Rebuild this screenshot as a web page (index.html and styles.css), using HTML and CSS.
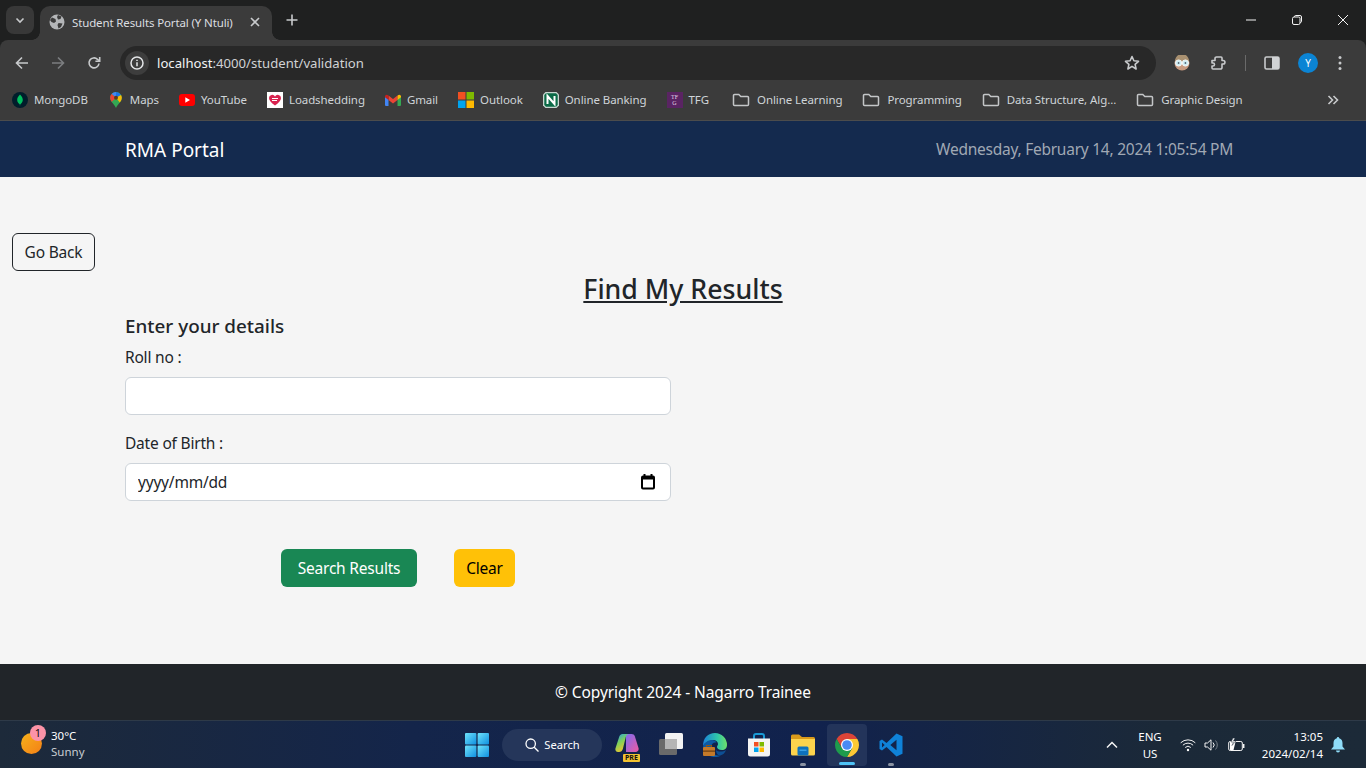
FILE: index.html
```html
<!DOCTYPE html>
<html lang="en">
<head>
<meta charset="utf-8">
<title>Student Results Portal (Y Ntuli)</title>
<link rel="stylesheet" href="styles.css">
</head>
<body>
<div class="screen">
  <header class="chrome">
    <div class="tabstrip">
      <div class="tab-search"><svg width="12" height="12" viewBox="0 0 12 12"><path d="M2.5 4.5 6 8l3.5-3.5" class="st-light2"/></svg></div>
      <div class="tab">
        <svg width="16" height="16" viewBox="0 0 16 16"><circle cx="8" cy="8" r="7.5" fill="#b4b6b8"/><path d="M3 3.500 6.500 5 7 7.500 5 9 2.500 8 1 6zM9 1l3.500 1.500-1 2.500-2.500.5-1-2.500zM9.500 9l4 .5L12 13l-2.500 1.500L8.500 11z" fill="#3b3b3b"/></svg>
        <span class="tab-title">Student Results Portal (Y Ntuli)</span>
        <svg class="tab-close" width="10" height="10" viewBox="0 0 10 10"><path d="M1 1l8 8M9 1 1 9" class="st-light2"/></svg>
      </div>
      <svg class="new-tab" width="12" height="12" viewBox="0 0 12 12"><path d="M6 .5v11M.5 6h11" class="st-light2"/></svg>
      <div class="win-controls">
        <svg width="10" height="10" viewBox="0 0 10 10"><path d="M0 5h10" class="st-white"/></svg>
        <svg width="10" height="10" viewBox="0 0 10 10"><rect x=".5" y="2" width="7.5" height="7.5" rx="1.5" class="st-white"/><path d="M2.500 2V1.700a1.200 1.200 0 0 1 1.200-1.200H8a1.500 1.500 0 0 1 1.500 1.500v4.300A1.200 1.200 0 0 1 8.300 7.500H8" class="st-white"/></svg>
        <svg width="10" height="10" viewBox="0 0 10 10"><path d="M0 0l10 10M10 0 0 10" class="st-white"/></svg>
      </div>
    </div>
    <div class="toolbar">
      <div class="nav-icons">
        <svg width="14" height="14" viewBox="0 0 14 14"><path d="M13 7H1.500M7 1.500 1.500 7 7 12.500" class="st-light2"/></svg>
        <svg width="14" height="14" viewBox="0 0 14 14"><path d="M1 7h11.500M7 1.500 12.500 7 7 12.500" class="st-dim"/></svg>
        <svg width="14" height="14" viewBox="0 0 14 14"><path d="M12 7.500A5 5 0 1 1 10.500 3.300L12.500 5" class="st-light2"/><path d="M12.700 1v4.300H8.400" class="st-light2"/></svg>
      </div>
      <div class="omnibox">
        <div class="site-chip"><svg width="14" height="14" viewBox="0 0 14 14"><circle cx="7" cy="7" r="6" class="st-light"/><path d="M7 6.200V10.200M7 3.800v1.200" class="st-light"/></svg></div>
        <span class="url">localhost<span class="url-dim">:4000/student/validation</span></span>
        <svg class="star" width="16" height="16" viewBox="0 0 16 16"><path d="M8 1.500l1.900 4.300 4.600.5-3.400 3.100 1 4.600L8 11.300l-4.100 2.700 1-4.600L1.500 6.300l4.600-.5z" class="st-light2 star-line"/></svg>
      </div>
      <div class="tool-icons">
        <svg width="16" height="16" viewBox="0 0 16 16"><circle cx="8" cy="8" r="7.500" fill="#c79a80"/><path d="M1 6a7 7 0 0 1 14 0z" fill="#a89070"/><circle cx="4.600" cy="8" r="3.100" fill="#cfeef4" stroke="#f4f4f4"/><circle cx="11.400" cy="8" r="3.100" fill="#cfeef4" stroke="#f4f4f4"/><circle cx="4.600" cy="8" r=".9" fill="#567"/><circle cx="11.400" cy="8" r=".9" fill="#567"/></svg>
        <svg width="16" height="16" viewBox="0 0 16 16"><path d="M1 5.500h3V3.500a1.500 1.500 0 0 1 1.500-1.500H10a1 1 0 0 1 1 1V5.500h1.200a1.500 1.500 0 0 1 0 3.500H11v3.500a1.500 1.500 0 0 1-1.500 1.500H2a1 1 0 0 1-1-1V11h1a1.500 1.500 0 0 0 0-3H1z" class="st-light2 star-line"/></svg>
        <span class="tool-sep"></span>
        <svg width="16" height="16" viewBox="0 0 16 16"><rect x="1" y="2" width="14" height="12" rx="1.500" class="st-light2 star-line"/><rect x="8" y="2" width="7" height="12" fill="#d0d2d4"/></svg>
        <span class="avatar">Y</span>
        <svg width="4" height="16" viewBox="0 0 4 16"><circle cx="2" cy="2.500" r="1.500" fill="#c8cacc"/><circle cx="2" cy="8" r="1.500" fill="#c8cacc"/><circle cx="2" cy="13.500" r="1.500" fill="#c8cacc"/></svg>
      </div>
    </div>
    <nav class="bookmarks">
      <span class="bm"><svg width="16" height="16" viewBox="0 0 16 16"><circle cx="8" cy="8" r="8" fill="#001e2b"/><path d="M8 2.500c2 2 2.800 3.800 2.800 5.500S9.500 11.500 8.300 12.200L8 14l-.3-1.800C6.500 11.500 5.200 10 5.200 8S6 4.500 8 2.500z" fill="#00c05e"/></svg><span>MongoDB</span></span>
      <span class="bm"><svg width="16" height="16" viewBox="0 0 16 16"><path d="M8 16C6.700 12.500 2.200 10 2.200 5.800a5.800 5.800 0 0 1 11.600 0C13.800 10 9.300 12.500 8 16z" fill="#34a853"/><path d="M3.600 2.100A5.800 5.800 0 0 1 8 0v5.800z" fill="#4285f4"/><path d="M8 0a5.800 5.800 0 0 1 5 2.900L8 5.800z" fill="#1a73e8"/><path d="M3.600 2.100 8 5.800 3.800 9.800C2.800 8.400 2.200 7.300 2.200 5.800c0-1.400.5-2.700 1.400-3.700z" fill="#ea4335"/><path d="M13 2.900a5.800 5.800 0 0 1 .8 2.900c0 1.800-.8 3.100-2 4.600L8 5.800z" fill="#fbbc04"/><circle cx="8" cy="5.800" r="2" fill="#5f3a1e"/></svg><span>Maps</span></span>
      <span class="bm"><svg width="16" height="12" viewBox="0 0 16 12"><rect width="16" height="12" rx="3" fill="#f00"/><path d="M6.300 3.300v5.400L11 6z" fill="#fff"/></svg><span>YouTube</span></span>
      <span class="bm"><svg width="16" height="16" viewBox="0 0 16 16"><rect width="16" height="16" fill="#fff"/><path d="M8 13.500C4 10.500 2 8.500 2 6a3.200 3.200 0 0 1 6-1.500A3.200 3.200 0 0 1 14 6c0 2.500-2 4.500-6 7.500z" fill="#d8234f"/><path d="M5 6.500h6M5 8.500h5" stroke="#fff" fill="none"/></svg><span>Loadshedding</span></span>
      <span class="bm"><svg width="16" height="12" viewBox="0 0 16 12"><path d="M0 2.500V11a1 1 0 0 0 1 1h2.500V5.500z" fill="#4285f4"/><path d="M16 2.500V11a1 1 0 0 1-1 1h-2.500V5.500z" fill="#34a853"/><path d="M3.500 6V1.500L8 5l4.500-3.500V6L8 9.500z" fill="#ea4335"/><path d="M0 2.800A1.800 1.800 0 0 1 3 1.300L3.500 1.700V6L0 3.300z" fill="#c5221f"/><path d="M16 2.800A1.800 1.800 0 0 0 13 1.300L12.500 1.700V6L16 3.300z" fill="#fbbc04"/></svg><span>Gmail</span></span>
      <span class="bm"><svg width="16" height="16" viewBox="0 0 16 16"><rect width="7.500" height="7.500" fill="#f25022"/><rect x="8.500" width="7.500" height="7.500" fill="#7fba00"/><rect y="8.500" width="7.500" height="7.500" fill="#00a4ef"/><rect x="8.500" y="8.500" width="7.500" height="7.500" fill="#ffb900"/></svg><span>Outlook</span></span>
      <span class="bm"><svg width="16" height="16" viewBox="0 0 16 16"><path d="M2.500 0h11L16 2.500v11L13.500 16h-11L0 13.500v-11z" fill="#c8d6d0"/><path d="M3 1.300h10L14.700 3v10L13 14.700H3L1.300 13V3z" fill="#0b6b47"/><path d="M4.500 12V4l7 8V4" fill="none" stroke="#fff" stroke-width="2"/></svg><span>Online Banking</span></span>
      <span class="bm"><span class="tfg">TF<br>G</span><span>TFG</span></span>
      <span class="bm bm-folder bm-first"><svg class="folder" width="18" height="16" viewBox="0 0 18 16"><path d="M1.500 3.500a1 1 0 0 1 1-1h4.300l2 2h6.700a1 1 0 0 1 1 1v7a1 1 0 0 1-1 1h-13a1 1 0 0 1-1-1z" class="st-folder"/></svg><span>Online Learning</span></span>
      <span class="bm bm-folder"><svg class="folder" width="18" height="16" viewBox="0 0 18 16"><path d="M1.500 3.500a1 1 0 0 1 1-1h4.300l2 2h6.700a1 1 0 0 1 1 1v7a1 1 0 0 1-1 1h-13a1 1 0 0 1-1-1z" class="st-folder"/></svg><span>Programming</span></span>
      <span class="bm bm-folder"><svg class="folder" width="18" height="16" viewBox="0 0 18 16"><path d="M1.500 3.500a1 1 0 0 1 1-1h4.300l2 2h6.700a1 1 0 0 1 1 1v7a1 1 0 0 1-1 1h-13a1 1 0 0 1-1-1z" class="st-folder"/></svg><span>Data Structure, Alg...</span></span>
      <span class="bm bm-folder"><svg class="folder" width="18" height="16" viewBox="0 0 18 16"><path d="M1.500 3.500a1 1 0 0 1 1-1h4.300l2 2h6.700a1 1 0 0 1 1 1v7a1 1 0 0 1-1 1h-13a1 1 0 0 1-1-1z" class="st-folder"/></svg><span>Graphic Design</span></span>
      <svg class="more" width="12" height="10" viewBox="0 0 12 10"><path d="M1.500 1l4 4-4 4M6.500 1l4 4-4 4" class="st-light2"/></svg>
    </nav>
  </header>

  <div class="page">
    <div class="topnav">
      <span class="brand">RMA Portal</span>
      <span class="clock">Wednesday, February 14, 2024 1:05:54 PM</span>
    </div>
    <main class="main">
      <button class="btn btn-back" type="button">Go Back</button>
      <h1 class="title">Find My Results</h1>
      <form class="form">
        <h2 class="subtitle">Enter your details</h2>
        <label class="label label-first" for="roll">Roll no :</label>
        <input class="control" id="roll" type="text">
        <label class="label" for="dob">Date of Birth :</label>
        <div class="control control-date">
          <input class="date-text" id="dob" type="text" value="yyyy/mm/dd">
          <svg width="14" height="16" viewBox="0 0 14 16"><path d="M3.500 0v3M10.500 0v3" stroke="#000" stroke-width="2" fill="none"/><rect x="1" y="2.500" width="12" height="12" rx="1" fill="none" stroke="#000" stroke-width="2"/><rect x="1" y="2" width="12" height="3.500" fill="#000"/></svg>
        </div>
        <div class="actions">
          <button class="btn btn-search" type="button">Search Results</button>
          <button class="btn btn-clear" type="button">Clear</button>
        </div>
      </form>
    </main>
    <footer class="footer">© Copyright 2024 - Nagarro Trainee</footer>
  </div>

  <div class="taskbar">
    <div class="weather">
      <span class="sun"><span class="sun-badge">1</span></span>
      <span class="weather-text"><span class="temp">30°C</span><span class="sky">Sunny</span></span>
    </div>
    <div class="task-center">
      <svg class="win-logo" width="24" height="24" viewBox="0 0 24 24"><defs><linearGradient id="w" x1="0" y1="0" x2="1" y2="1"><stop offset="0" stop-color="#6fe3fb"/><stop offset="1" stop-color="#0f8fe0"/></linearGradient></defs><rect width="11.400" height="11.400" rx="1" fill="url(#w)"/><rect x="12.600" width="11.400" height="11.400" rx="1" fill="url(#w)"/><rect y="12.600" width="11.400" height="11.400" rx="1" fill="url(#w)"/><rect x="12.600" y="12.600" width="11.400" height="11.400" rx="1" fill="url(#w)"/></svg>
      <div class="search-pill"><svg width="14" height="14" viewBox="0 0 14 14"><circle cx="5.700" cy="5.700" r="4.700" fill="none" stroke="#fff" stroke-width="1.300"/><path d="M9.200 9.200 13.500 13.500" stroke="#fff" stroke-width="1.300"/></svg><span>Search</span></div>
      <div class="task-icons">
        <span class="task-item">
          <svg width="24" height="24" viewBox="0 0 24 24"><defs><linearGradient id="cp" x1="0" y1="0" x2=".5" y2="1"><stop offset="0" stop-color="#1f9ff0"/><stop offset=".5" stop-color="#7fd05a"/><stop offset="1" stop-color="#f2c52e"/></linearGradient><linearGradient id="cp2" x1="0" y1="0" x2="1" y2="1"><stop offset="0" stop-color="#7d6cf0"/><stop offset="1" stop-color="#ee5aa0"/></linearGradient></defs><path d="M11 1h5.500c1.700 0 2.800.9 3.300 2.300L23.500 15c.6 2-.7 4-2.800 4H11z" fill="url(#cp2)"/><path d="M7.500 1H14c-1.700.3-2.700 1.400-3.200 3L7.900 15.700C7.400 17.700 6 19 4 19H3c-2 0-3.100-1.800-2.500-3.700L4.300 3.500C4.900 1.900 5.900 1 7.500 1z" fill="url(#cp)"/></svg>
          <span class="pre">PRE</span>
        </span>
        <span class="task-item">
          <svg width="24" height="24" viewBox="0 0 24 24"><rect x="6" width="18" height="16" rx="1.500" fill="#f2f2f2"/><rect y="6" width="18" height="16" rx="1.500" fill="#6a6a6a"/><rect x="6" y="6" width="12" height="10" fill="#b5b5b5"/></svg>
        </span>
        <span class="task-item">
          <svg width="24" height="24" viewBox="0 0 24 24"><defs><linearGradient id="e1" x1="0" y1="0" x2="1" y2="0"><stop offset="0" stop-color="#1a80d8"/><stop offset=".6" stop-color="#2fc6a8"/><stop offset="1" stop-color="#6ee06a"/></linearGradient></defs><path d="M12 0a12 12 0 0 1 12 12c0 3-2 5-5 5-3.500 0-5-1.500-5-3s1-1.500 1-3c0-2-2-4-5-4C6 7 1 11 0 13 0 5 5 0 12 0z" fill="url(#e1)"/><path d="M0 13c1-3 5-6 9-6 2 0 4 1 4.500 2.500C9 9 7 13 9 18c1 3 5 5.500 9 4.500A12 12 0 0 1 0 13z" fill="#0c59a4"/><path d="M13 17c2 2 7 2 10 0-1 3-3 5-6 5.500-2 0-4-2-4-5.500z" fill="#0d4f94"/><rect y="14" width="12" height="9" rx="1" fill="#c47a2a"/><rect x="0" y="17.500" width="12" height="1.200" fill="#6a3d10"/><path d="M3.500 14v-1.500h5V14" fill="none" stroke="#8a5518" stroke-width="1.200"/></svg>
        </span>
        <span class="task-item">
          <svg width="24" height="24" viewBox="0 0 24 24"><path d="M7 6V3a2 2 0 0 1 2-2h6a2 2 0 0 1 2 2v3" fill="none" stroke="#1a9ad6" stroke-width="2"/><path d="M1 5.500h22V21a2.500 2.500 0 0 1-2.500 2.500h-17A2.500 2.500 0 0 1 1 21z" fill="#f4f4f4"/><rect x="7" y="9" width="4.500" height="4.500" fill="#f25022"/><rect x="12.500" y="9" width="4.500" height="4.500" fill="#7fba00"/><rect x="7" y="14.500" width="4.500" height="4.500" fill="#00a4ef"/><rect x="12.500" y="14.500" width="4.500" height="4.500" fill="#ffb900"/></svg>
        </span>
        <span class="task-item has-dot">
          <svg width="24" height="24" viewBox="0 0 24 24"><path d="M0 3a1.500 1.500 0 0 1 1.500-1.500h6.500L11 4h11.500A1.500 1.500 0 0 1 24 5.500V8H0z" fill="#d99a1b"/><path d="M0 6h24v15a1.500 1.500 0 0 1-1.500 1.500h-21A1.500 1.500 0 0 1 0 21z" fill="#fcd34d"/><rect x="6.500" y="13.500" width="11" height="9" rx="1.500" fill="#0e72bd"/><rect x="8.500" y="16.500" width="7" height="1.500" fill="#3aa0e4"/></svg>
        </span>
        <span class="task-item active">
          <svg width="24" height="24" viewBox="4 4 40 40"><path d="M6.680 14A20 20 0 0 1 41.320 14H24L15.340 29z" fill="#db4437"/><path d="M41.320 14A20 20 0 0 1 24 44L32.660 29 24 14z" fill="#fcc934"/><path d="M24 44A20 20 0 0 1 6.680 14L15.340 29H32.660z" fill="#1e9b4c"/><circle cx="24" cy="24" r="10" fill="#fff"/><circle cx="24" cy="24" r="8" fill="#4a8af4"/></svg>
        </span>
        <span class="task-item has-dot">
          <svg width="24" height="24" viewBox="0 0 24 24"><path fill-rule="evenodd" d="M17.500.5 23.500 3.300V20.700L17.500 23.500 7.500 14 3 17.400 .5 16V8L3 6.600 7.500 10zM17.500 6.800 11.300 12l6.200 5.200zM3 9.500V14.500L5.700 12z" fill="#0f82d8"/></svg>
        </span>
      </div>
    </div>
    <div class="tray">
      <svg class="tray-up" width="12" height="8" viewBox="0 0 12 8"><path d="M1 6.500 6 1.500l5 5" class="st-white st-15"/></svg>
      <span class="lang"><span>ENG</span><span>US</span></span>
      <div class="tray-icons">
        <svg width="16" height="14" viewBox="0 0 16 14"><path d="M.7 4.800a10.500 10.500 0 0 1 14.600 0M2.900 7.200a7.300 7.300 0 0 1 10.200 0M5.200 9.500a4 4 0 0 1 5.600 0" class="st-white"/><circle cx="8" cy="12" r="1.200" fill="#fff"/></svg>
        <svg width="16" height="14" viewBox="0 0 16 14"><path d="M1 5h2.500L7 1.800v10.400L3.500 9H1z" class="st-white"/><path d="M9 4.500a3.500 3.500 0 0 1 0 5" class="st-white"/><path d="M11.500 2.500a6.500 6.500 0 0 1 0 9" stroke="#7a828a" fill="none"/></svg>
        <svg width="17" height="14" viewBox="0 0 17 14"><rect x=".7" y="3.500" width="13.600" height="9" rx="1.500" class="st-white"/><path d="M15.700 6v4" class="st-white st-15"/><path d="M2 4h5.500l-2 8H2z" fill="#fff"/><path d="M5 0 3 4h2.500L4 7.500 8 3H5.500L7 0z" fill="#fff" stroke="#1c2b3b" stroke-width=".5"/></svg>
      </div>
      <span class="time"><span>13:05</span><span>2024/02/14</span></span>
      <svg class="bell" width="14" height="16" viewBox="0 0 14 16"><path d="M7 0a1.200 1.200 0 0 1 1.200 1.200C10.500 1.800 11.500 3.800 11.500 6V9.500L14 12.500H0L2.500 9.500V6C2.500 3.800 3.500 1.800 5.800 1.200A1.200 1.200 0 0 1 7 0zM5 13.500h4a2 2 0 0 1-4 0z" fill="#8fdcf8"/></svg>
    </div>
  </div>
</div>
</body>
</html>
```
FILE: styles.css
```css
* { box-sizing: border-box; }
html, body { margin: 0; padding: 0; overflow: hidden; }
body { font-family: "Noto Sans", "Open Sans", sans-serif; background: #f5f5f5; }
svg { display: block; flex: none; }
.screen { width: 1366px; height: 768px; display: flex; flex-direction: column; }

/* shared stroke styles */
.st-light { fill: none; stroke: #e4e6e8; stroke-width: 1.5; }
.st-light2 { fill: none; stroke: #c8cacc; stroke-width: 1.6; }
.st-dim { fill: none; stroke: #7c7e80; stroke-width: 1.6; }
.st-white { fill: none; stroke: #f4f4f4; stroke-width: 1; }
.st-15 { stroke-width: 1.5; }
.star-line { stroke-linejoin: round; }
.st-folder { fill: none; stroke: #c4c6c8; stroke-width: 1.5; }

/* browser chrome */
.chrome { background: #1f2020; flex: none; }
.tabstrip { height: 40px; display: flex; align-items: flex-end; padding-left: 6px; }
.tab-search { width: 28px; height: 28px; margin-bottom: 6px; background: #383838; border-radius: 8px; display: flex; align-items: center; justify-content: center; }
.tab { width: 232px; height: 34px; margin-left: 6px; background: #3b3b3b; border-radius: 10px 10px 0 0; display: flex; align-items: center; padding: 0 0 2px 9px; font-size: 11.5px; letter-spacing: -0.13px; color: #dcdee0; position: relative; }
.tab::before, .tab::after { content: ""; position: absolute; bottom: 0; width: 8px; height: 8px; background: radial-gradient(circle at var(--c) 0, transparent 7.5px, #3b3b3b 8px); }
.tab::before { left: -8px; --c: 0; }
.tab::after { right: -8px; --c: 100%; }
.tab-title { margin-left: 7px; flex: 1; white-space: nowrap; }
.tab-close { margin-right: 12px; }
.new-tab { margin: 0 0 14px 14px; }
.win-controls { margin-left: auto; height: 40px; display: flex; align-items: center; gap: 36px; padding-right: 18px; padding-bottom: 1px; }

.toolbar { height: 40px; background: #3b3b3b; border-radius: 8px 8px 0 0; display: flex; align-items: flex-end; padding-left: 15px; }
.nav-icons { display: flex; gap: 22px; align-items: center; height: 34px; width: 105px; }
.omnibox { width: 1036px; height: 34px; background: #282828; border-radius: 17px; display: flex; align-items: center; padding: 0 16px 0 5px; }
.site-chip { width: 24px; height: 24px; border-radius: 50%; background: #3d3d3d; display: flex; align-items: center; justify-content: center; }
.url { margin-left: 8px; font-size: 13.15px; color: #f1f3f4; flex: 1; }
.url-dim { color: #d0d2d4; }
.tool-icons { display: flex; align-items: center; height: 34px; margin-left: 18px; }
.tool-icons > :nth-child(2) { margin-left: 21px; }
.tool-sep { width: 1px; height: 16px; background: #6a6a6a; margin: 0 18px; }
.avatar { width: 20px; height: 20px; border-radius: 50%; background: #0b84d4; color: #fff; font-size: 10px; display: flex; align-items: center; justify-content: center; margin: 0 20px 0 18px; }

.bookmarks { height: 41px; background: #3b3b3b; border-bottom: 1px solid #4c4c4c; display: flex; align-items: center; padding: 0 0 1px 12px; font-size: 11.5px; letter-spacing: -0.08px; color: #cfd4d8; gap: 20px; }
.bm { display: flex; align-items: center; gap: 6px; white-space: nowrap; }
.bm-folder { gap: 7px; }
.bm-first { margin-left: 3px; }
.tfg { width: 16px; height: 16px; background: #5a2463; color: #e3d7e6; font: 6px/6px "Liberation Serif", serif; letter-spacing: 0; text-align: center; padding-top: 2px; }
.more { margin-left: auto; margin-right: 27px; }

/* page */
.page { flex: 1; display: flex; flex-direction: column; min-height: 0; }
.topnav { height: 56px; background: #142a4e; padding: 0 133px 0 125px; display: flex; align-items: center; justify-content: space-between; flex: none; }
.brand { font-size: 19px; color: #fff; padding-top: 2px; }
.clock { font-size: 15.5px; letter-spacing: -0.25px; color: #a0a8b4; }
.main { flex: 1; padding: 56px 12px 0; color: #212529; }
.btn { font: inherit; font-size: 15.5px; letter-spacing: -0.2px; height: 38px; border-radius: 6px; border: 1px solid transparent; padding: 0 12px; cursor: pointer; display: block; }
.btn-back { background: transparent; border-color: #212529; color: #212529; width: 83px; padding: 0; }
.title { font-size: 26.7px; font-weight: 500; text-align: center; text-decoration: underline; margin: 0; line-height: 36px; }
.form { margin: 0 0 0 113px; width: 546px; }
.subtitle { font-size: 18.85px; font-weight: 500; margin: 6px 0 0; line-height: 26px; }
.label { display: block; font-size: 15.5px; letter-spacing: -0.2px; line-height: 24px; margin: 16px 0 8px; }
.label-first { margin-top: 6px; }
.control { display: block; width: 100%; height: 38px; background: #fff; border: 1px solid #ced4da; border-radius: 6px; padding: 0 12px; font: inherit; font-size: 15.5px; letter-spacing: -0.2px; color: #212529; }
.control-date { display: flex; align-items: center; justify-content: space-between; padding-right: 15px; }
.date-text { border: 0; outline: 0; padding: 0; background: none; font: inherit; letter-spacing: inherit; color: #212529; flex: 1; }
.actions { display: flex; gap: 37px; margin: 48px 0 0 156px; }
.btn-search { width: 136px; background: #198754; color: #fff; padding: 0; }
.btn-clear { width: 61px; background: #ffc107; color: #000; padding: 0; }
.footer { height: 56px; flex: none; background: #212529; color: #fff; font-size: 15.5px; letter-spacing: -0.1px; display: flex; align-items: center; justify-content: center; }

/* taskbar */
.taskbar { height: 48px; flex: none; border-top: 1px solid #2e3a48; background: linear-gradient(90deg, #1d2a3a 0, #14254a 30%, #11224d 60%, #1b2938 85%, #1c2a38 100%); display: flex; align-items: center; position: relative; color: #fff; }
.weather { display: flex; align-items: center; gap: 9px; padding: 0 0 2px 21px; width: 465px; font-size: 11.5px; line-height: 16px; }
.sun { width: 21px; height: 21px; border-radius: 50%; background: linear-gradient(135deg, #f6b21b, #f47f16); position: relative; margin-bottom: 1px; }
.sun-badge { position: absolute; left: 9px; top: -8px; width: 16px; height: 16px; border-radius: 50%; background: #fb93a8; color: #111; font-size: 11px; line-height: 16px; text-align: center; }
.weather-text { display: flex; flex-direction: column; }
.sky { color: #c8ccd0; }
.task-center { display: flex; align-items: center; width: 448px; }
.win-logo { margin-right: 13px; }
.search-pill { width: 100px; height: 32px; border-radius: 16px; background: #25365a; display: flex; align-items: center; justify-content: center; gap: 5px; font-size: 11.2px; padding-left: 1px; flex: none; }
.task-icons { display: flex; margin-left: 3px; }
.task-item { width: 44px; height: 42px; display: flex; align-items: center; justify-content: center; position: relative; }
.pre { position: absolute; left: 18px; bottom: 4px; background: #f2c230; color: #111; font-size: 7px; font-weight: 700; line-height: 8px; padding: 0 2px; border-radius: 1px; }
.has-dot::after { content: ""; position: absolute; bottom: 0; left: 19px; width: 6px; height: 3px; border-radius: 2px; background: #8a93a3; }
.active { width: 40px; margin: 0 2px; background: #23345a; border-radius: 4px; }
.active::after { content: ""; position: absolute; bottom: 1px; left: 12px; width: 16px; height: 3px; border-radius: 2px; background: #4fc3f7; }
.tray { flex: 1; display: flex; align-items: center; font-size: 11.5px; line-height: 17px; }
.tray-up { margin-left: 193px; }
.lang { display: flex; flex-direction: column; align-items: center; width: 40px; margin-left: 12px; }
.tray-icons { display: flex; align-items: center; gap: 8px; margin-left: 10px; }
.time { display: flex; flex-direction: column; align-items: flex-end; width: 77px; margin-left: 1px; }
.bell { margin-left: 8px; }
```
